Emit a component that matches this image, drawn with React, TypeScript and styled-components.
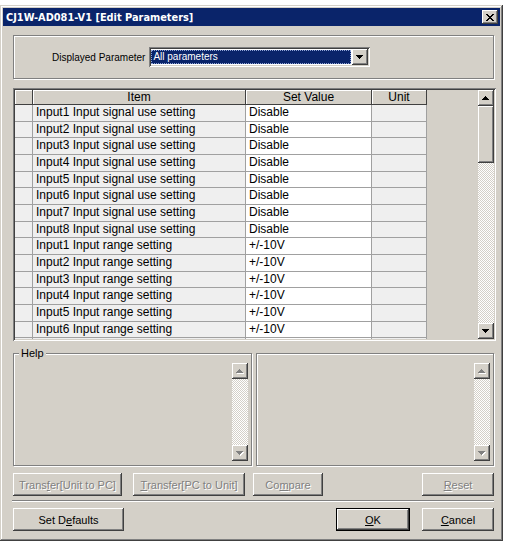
import React from "react";
import styled, { createGlobalStyle, css } from "styled-components";

const face = "#d4d0c8";

const GlobalStyle = createGlobalStyle`
  html, body {
    margin: 0;
    padding: 0;
    background: #fff;
  }
  body {
    font-family: "Liberation Sans", Arial, sans-serif;
    color: #000;
  }
  * {
    box-sizing: border-box;
  }
`;

const raised = css`
  background: ${face};
  box-shadow: inset -1px -1px #404040, inset 1px 1px #fff,
    inset -2px -2px #808080, inset 2px 2px ${face};
`;

const sunken = css`
  box-shadow: inset 1px 1px #808080, inset -1px -1px #fff,
    inset 2px 2px #404040, inset -2px -2px ${face};
`;

const etched = css`
  border: 1px solid #808080;
  box-shadow: inset 1px 1px #fff, 1px 1px #fff;
`;

const Window = styled.div`
  margin-top: 5px;
  width: 503px;
  height: 536px;
  padding: 3px;
  background: ${face};
  box-shadow: inset -1px -1px #404040, inset 1px 1px ${face},
    inset -2px -2px #808080, inset 2px 2px #fff;
  display: flex;
  flex-direction: column;
`;

const TitleBar = styled.div`
  height: 18px;
  flex-shrink: 0;
  background: #0a246a;
  display: flex;
  align-items: center;
  padding: 0 2px 0 3px;
`;

const TitleText = styled.span`
  color: #fff;
  font-family: "DejaVu Sans", Verdana, sans-serif;
  font-weight: bold;
  font-size: 9.8px;
  white-space: nowrap;
`;

const CloseButton = styled.div`
  ${raised};
  margin-left: auto;
  width: 16px;
  height: 14px;
  display: flex;
  align-items: center;
  justify-content: center;
`;

const Body = styled.div`
  flex: 1;
  display: flex;
  flex-direction: column;
  padding: 9px 6px 0 10px;
`;

const ParamGroup = styled.div`
  ${etched};
  height: 44px;
  width: 481px;
  display: flex;
  align-items: center;
  gap: 4px;
  padding-left: 38px;
`;

const ParamLabel = styled.span`
  font-size: 10px;
  white-space: nowrap;
`;

const Combo = styled.div`
  ${sunken};
  background: #fff;
  width: 221px;
  height: 20px;
  padding: 2px;
  display: flex;
`;

const ComboValue = styled.div`
  flex: 1;
  margin: 1px 1px 1px 0;
  background: #0a246a;
  color: #fff;
  font-size: 10px;
  line-height: 14px;
  padding-left: 2px;
  outline: 1px dotted #8fa3d6;
  outline-offset: -1px;
`;

const ScrollButton = styled.div`
  ${raised};
  width: 16px;
  height: 16px;
  flex-shrink: 0;
  display: flex;
  align-items: center;
  justify-content: center;
`;

const Grid = styled.div`
  ${sunken};
  margin-top: 9px;
  width: 483px;
  height: 253px;
  padding: 2px;
  display: flex;
  background: ${face};
`;

const Table = styled.div`
  flex: 1;
  overflow: hidden;
  display: flex;
  flex-direction: column;
`;

const columns = "18px 213px 126px 55px";

const HeaderRow = styled.div`
  display: grid;
  grid-template-columns: ${columns};
  height: 15px;
  flex-shrink: 0;
`;

const HeaderCell = styled.div`
  background: ${face};
  border-right: 1px solid #404040;
  border-bottom: 1px solid #404040;
  box-shadow: inset 1px 1px #fff;
  font-size: 12px;
  line-height: 14px;
  text-align: center;
  white-space: nowrap;
`;

const Row = styled.div`
  display: grid;
  grid-template-columns: ${columns};
  height: 16.67px;
  flex-shrink: 0;
`;

const Cell = styled.div<{ $white?: boolean }>`
  background: ${({ $white }) => ($white ? "#fff" : "#efefef")};
  border-right: 1px solid #a0a0a0;
  border-bottom: 1px solid #a0a0a0;
  font-size: 12px;
  line-height: 15.67px;
  padding-left: 3px;
  white-space: nowrap;
  overflow: hidden;
`;

const VScroll = styled.div`
  width: 16px;
  display: flex;
  flex-direction: column;
`;

const Thumb = styled.div`
  ${raised};
  height: 57px;
  flex-shrink: 0;
`;

const Track = styled.div`
  flex: 1;
  background-color: #fff;
  background-image: conic-gradient(
    ${face} 25%,
    #fff 0 50%,
    ${face} 0 75%,
    #fff 0
  );
  background-size: 2px 2px;
`;

const HelpRow = styled.div`
  margin-top: 12px;
  height: 113px;
  display: flex;
  gap: 4px;
`;

const Frame = styled.div<{ $w: number }>`
  ${etched};
  position: relative;
  width: ${({ $w }) => $w}px;
  display: flex;
  justify-content: flex-end;
  padding: 9px 3px 4px 0;
`;

const Legend = styled.span`
  position: absolute;
  top: -7px;
  left: 5px;
  padding: 0 2px;
  background: ${face};
  font-size: 11px;
  line-height: 12px;
`;

const ButtonRow = styled.div<{ $top: number }>`
  margin-top: ${({ $top }) => $top}px;
  height: 23px;
  display: flex;
`;

const Button = styled.div<{
  $w: number;
  $gap?: number;
  $push?: boolean;
  $disabled?: boolean;
  $default?: boolean;
}>`
  ${raised};
  width: ${({ $w }) => $w}px;
  margin-left: ${({ $push, $gap }) => ($push ? "auto" : `${$gap ?? 0}px`)};
  display: flex;
  align-items: center;
  justify-content: center;
  font-size: 11px;
  white-space: nowrap;
  color: ${({ $disabled }) => ($disabled ? "#808080" : "#000")};
  text-shadow: ${({ $disabled }) => ($disabled ? "1px 1px #fff" : "none")};
  ${({ $default }) =>
    $default &&
    css`
      box-shadow: inset 1px 1px #000, inset -1px -1px #000,
        inset -2px -2px #404040, inset 2px 2px #fff,
        inset -3px -3px #808080;
    `}
`;

const Separator = styled.div`
  margin-top: 4px;
  margin-left: -1px;
  width: 482px;
  height: 2px;
  border-top: 1px solid #808080;
  border-bottom: 1px solid #fff;
`;

const Arrow = ({ up, disabled }: { up?: boolean; disabled?: boolean }) => {
  const rows = up ? [0, 1, 2, 3] : [3, 2, 1, 0];
  const draw = (fill: string, dx: number) =>
    rows.map((r, i) => (
      <rect key={fill + i} x={3 - r + dx} y={i + dx} width={r * 2 + 1} height={1} fill={fill} />
    ));
  return (
    <svg width="8" height="5" viewBox="0 0 8 5" shapeRendering="crispEdges">
      {disabled && draw("#fff", 1)}
      {draw(disabled ? "#808080" : "#000", 0)}
    </svg>
  );
};

// the last row only peeks in under the header block, as in the dialog
const rows: [string, string][] = [
  ...[1, 2, 3, 4, 5, 6, 7, 8].map(
    (n) => [`Input${n} Input signal use setting`, "Disable"] as [string, string]
  ),
  ...[1, 2, 3, 4, 5, 6, 7].map(
    (n) => [`Input${n} Input range setting`, "+/-10V"] as [string, string]
  ),
];

const HelpScroll = () => (
  <VScroll>
    <ScrollButton>
      <Arrow up disabled />
    </ScrollButton>
    <Track />
    <ScrollButton>
      <Arrow disabled />
    </ScrollButton>
  </VScroll>
);

const App = () => {
  return (
    <>
      <GlobalStyle />
      <Window>
        <TitleBar>
          <TitleText>CJ1W-AD081-V1 [Edit Parameters]</TitleText>
          <CloseButton>
            <svg width="8" height="7" viewBox="0 0 8 7" shapeRendering="crispEdges">
              <path d="M0 0h2v1H0zM6 0h2v1H6zM1 1h2v1H1zM5 1h2v1H5zM2 2h4v1H2zM3 3h2v1H3zM2 4h4v1H2zM1 5h2v1H1zM5 5h2v1H5zM0 6h2v1H0zM6 6h2v1H6z" fill="#000" />
            </svg>
          </CloseButton>
        </TitleBar>
        <Body>
          <ParamGroup>
            <ParamLabel>Displayed Parameter</ParamLabel>
            <Combo>
              <ComboValue>All parameters</ComboValue>
              <ScrollButton>
                <Arrow />
              </ScrollButton>
            </Combo>
          </ParamGroup>

          <Grid>
            <Table>
              <HeaderRow>
                <HeaderCell />
                <HeaderCell>Item</HeaderCell>
                <HeaderCell>Set Value</HeaderCell>
                <HeaderCell>Unit</HeaderCell>
              </HeaderRow>
              {rows.map(([item, value]) => (
                <Row key={item}>
                  <Cell />
                  <Cell>{item}</Cell>
                  <Cell $white>{value}</Cell>
                  <Cell />
                </Row>
              ))}
            </Table>
            <VScroll>
              <ScrollButton>
                <Arrow up />
              </ScrollButton>
              <Thumb />
              <Track />
              <ScrollButton>
                <Arrow />
              </ScrollButton>
            </VScroll>
          </Grid>

          <HelpRow>
            <Frame $w={239}>
              <Legend>Help</Legend>
              <HelpScroll />
            </Frame>
            <Frame $w={238}>
              <HelpScroll />
            </Frame>
          </HelpRow>

          <ButtonRow $top={7}>
            <Button $w={109} $disabled>
              Trans<u>f</u>er[Unit to PC]
            </Button>
            <Button $w={112} $gap={11} $disabled>
              <u>T</u>ransfer[PC to Unit]
            </Button>
            <Button $w={70} $gap={8} $disabled>
              Co<u>m</u>pare
            </Button>
            <Button $w={72} $push $disabled>
              <u>R</u>eset
            </Button>
          </ButtonRow>

          <Separator />

          <ButtonRow $top={6}>
            <Button $w={111}>
              Set D<u>e</u>faults
            </Button>
            <Button $w={74} $push $default>
              <u>O</u>K
            </Button>
            <Button $w={72} $gap={12}>
              <u>C</u>ancel
            </Button>
          </ButtonRow>
        </Body>
      </Window>
    </>
  );
};

export default App;
